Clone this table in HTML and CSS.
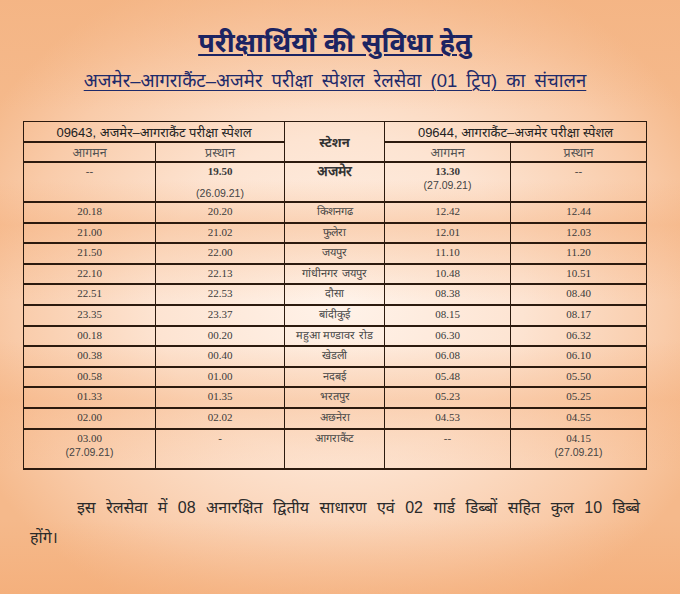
FILE: index.html
```html
<!DOCTYPE html>
<html lang="hi">
<head>
<meta charset="utf-8">
<title>परीक्षार्थियों की सुविधा हेतु</title>
<link rel="stylesheet" href="styles.css">
</head>
<body>
<div class="page">
  <h1 class="title">परीक्षार्थियों की सुविधा हेतु</h1>
  <h2 class="subtitle">अजमेर–आगराकैंट–अजमेर परीक्षा स्पेशल रेलसेवा (01 ट्रिप) का संचालन</h2>
  <table class="sched">
    <colgroup>
      <col class="c1"><col class="c2"><col class="c3"><col class="c4"><col class="c5">
    </colgroup>
    <tr class="h1row">
      <th colspan="2" class="train">09643, अजमेर–आगराकैंट परीक्षा स्पेशल</th>
      <th rowspan="2" class="stn-head">स्टेशन</th>
      <th colspan="2" class="train">09644, आगराकैंट–अजमेर परीक्षा स्पेशल</th>
    </tr>
    <tr class="h2row">
      <th class="sub">आगमन</th><th class="sub">प्रस्थान</th>
      <th class="sub">आगमन</th><th class="sub">प्रस्थान</th>
    </tr>
    <tr class="tall">
      <td class="num">--</td>
      <td class="num"><b>19.50</b><span class="date low">(26.09.21)</span></td>
      <td class="stn main">अजमेर</td>
      <td class="num"><b>13.30</b><span class="date">(27.09.21)</span></td>
      <td class="num">--</td>
    </tr>
    <tr><td class="num">20.18</td><td class="num">20.20</td><td class="stn">किशनगढ</td><td class="num">12.42</td><td class="num">12.44</td></tr>
    <tr><td class="num">21.00</td><td class="num">21.02</td><td class="stn">फुलेरा</td><td class="num">12.01</td><td class="num">12.03</td></tr>
    <tr><td class="num">21.50</td><td class="num">22.00</td><td class="stn">जयपुर</td><td class="num">11.10</td><td class="num">11.20</td></tr>
    <tr><td class="num">22.10</td><td class="num">22.13</td><td class="stn">गांधीनगर जयपुर</td><td class="num">10.48</td><td class="num">10.51</td></tr>
    <tr><td class="num">22.51</td><td class="num">22.53</td><td class="stn">दौसा</td><td class="num">08.38</td><td class="num">08.40</td></tr>
    <tr><td class="num">23.35</td><td class="num">23.37</td><td class="stn">बांदीकुई</td><td class="num">08.15</td><td class="num">08.17</td></tr>
    <tr><td class="num">00.18</td><td class="num">00.20</td><td class="stn">महुआ मण्डावर रोड</td><td class="num">06.30</td><td class="num">06.32</td></tr>
    <tr><td class="num">00.38</td><td class="num">00.40</td><td class="stn">खेडली</td><td class="num">06.08</td><td class="num">06.10</td></tr>
    <tr><td class="num">00.58</td><td class="num">01.00</td><td class="stn">नदबई</td><td class="num">05.48</td><td class="num">05.50</td></tr>
    <tr><td class="num">01.33</td><td class="num">01.35</td><td class="stn">भरतपुर</td><td class="num">05.23</td><td class="num">05.25</td></tr>
    <tr><td class="num">02.00</td><td class="num">02.02</td><td class="stn">अछनेरा</td><td class="num">04.53</td><td class="num">04.55</td></tr>
    <tr class="tall last">
      <td class="num">03.00<span class="date">(27.09.21)</span></td>
      <td class="num">-</td>
      <td class="stn">आगराकैंट</td>
      <td class="num">--</td>
      <td class="num">04.15<span class="date">(27.09.21)</span></td>
    </tr>
  </table>
  <p class="note">इस रेलसेवा में 08 अनारक्षित द्वितीय साधारण एवं 02 गार्ड डिब्बों सहित कुल 10 डिब्बे होंगे।</p>
</div>
</body>
</html>
```

FILE: styles.css
```css
html, body {
  margin: 0;
  padding: 0;
}

body {
  width: 680px;
  height: 594px;
  overflow: hidden;
  font-family: "Liberation Sans", "Noto Sans", sans-serif;
  color: #2a2a2a;
  background:
    linear-gradient(180deg,
      rgba(244, 178, 128, 0.55) 0px,
      rgba(244, 178, 128, 0.0) 110px,
      rgba(244, 178, 128, 0.0) 180px,
      rgba(244, 170, 115, 0.4) 225px,
      rgba(244, 178, 128, 0.0) 300px,
      rgba(244, 178, 128, 0.0) 340px,
      rgba(244, 170, 115, 0.4) 400px,
      rgba(244, 178, 128, 0.0) 470px,
      rgba(244, 178, 128, 0.0) 520px,
      rgba(244, 170, 115, 0.6) 594px),
    radial-gradient(ellipse 60% 60% at 50% 50%,
      #fff3ea 0%, #fde4d2 45%, #f9cba9 80%, #f5b98b 100%);
}

.page {
  display: flex;
  flex-direction: column;
  align-items: center;
  padding-right: 10px;
}

.title {
  margin: 26px 0 0;
  font-size: 27px;
  line-height: 34px;
  font-weight: bold;
  color: #1c2462;
  text-decoration: underline;
  text-decoration-thickness: 2px;
  text-underline-offset: 2px;
}

.subtitle {
  margin: 8px 0 0;
  font-size: 18.5px;
  line-height: 26px;
  font-weight: normal;
  color: #1e2a6a;
  word-spacing: 4px;
  text-decoration: underline;
  text-decoration-thickness: 1px;
  text-underline-offset: 3px;
}

.sched {
  align-self: flex-start;
  margin: 27px 0 0 23px;
  border-collapse: collapse;
  table-layout: fixed;
  width: 623px;
  border: 1.5px solid #2c1a0e;
}

.c1 { width: 132px; }
.c2 { width: 129px; }
.c3 { width: 100px; }
.c4 { width: 126px; }
.c5 { width: 136px; }

.sched th,
.sched td {
  border: 1px solid #2c1a0e;
  border-bottom-width: 2px;
  padding: 1px 2px 0;
  text-align: center;
  vertical-align: top;
}

.sched th.train {
  height: 18px;
  font-size: 13px;
  font-weight: normal;
  color: #222;
  vertical-align: middle;
}

.sched th.sub {
  height: 16px;
  font-size: 12.5px;
  font-weight: normal;
  color: #555;
  vertical-align: middle;
}

.sched th.stn-head {
  font-size: 13px;
  font-weight: bold;
  color: #333;
  vertical-align: middle;
}

.sched td {
  height: 17.6px;
  line-height: 14px;
  font-size: 11px;
}

.sched tr.tall td {
  height: 37px;
}

.sched tr.last td {
  border-bottom-width: 2.5px;
}

.num {
  font-family: "Liberation Serif", serif;
  color: #3a3a3a;
}

.num b {
  display: block;
  font-weight: bold;
}

.date {
  display: block;
  font-family: "Liberation Sans", sans-serif;
  font-size: 10.5px;
  color: #444;
}

.date.low {
  margin-top: 8px;
}

.stn {
  font-family: "Liberation Sans", sans-serif;
  font-size: 12px;
  color: #444;
}

.stn.main {
  font-size: 14px;
  font-weight: bold;
  color: #333;
}

.note {
  margin: 23px 30px 0 30px;
  align-self: stretch;
  font-size: 16px;
  line-height: 30px;
  text-align: justify;
  text-indent: 47px;
  word-spacing: 4px;
  color: #2a2a2a;
}
```
